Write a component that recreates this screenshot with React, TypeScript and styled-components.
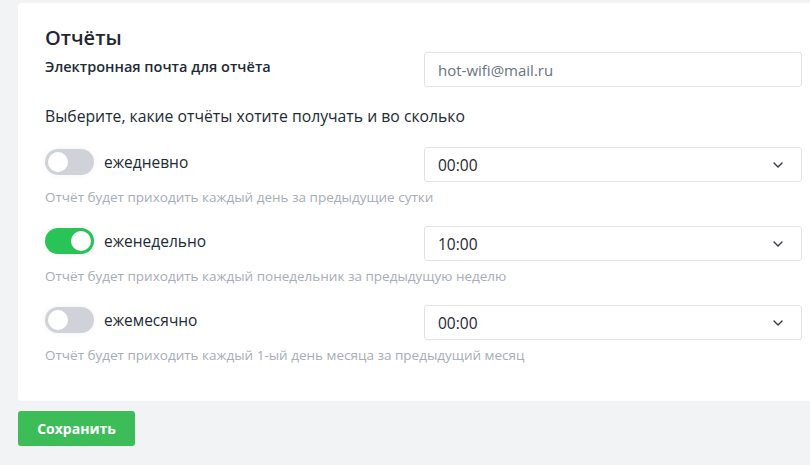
import React, { FC, useState } from "react";
import styled, { createGlobalStyle } from "styled-components";

const GlobalStyle = createGlobalStyle`
  html, body {
    margin: 0;
    padding: 0;
    background: #f2f3f5;
    overflow: hidden;
  }
  body {
    font-family: "Open Sans", "Noto Sans", sans-serif;
    color: #222a36;
  }
  * {
    box-sizing: border-box;
  }
`;

const StyledPage = styled.div`
  padding: 3px 0 0 18px;
  width: 830px;
`;

const StyledCard = styled.div`
  background: #ffffff;
  border-radius: 4px;
  padding: 21px 27px 17px 27px;
  width: 811px;
`;

const StyledTitle = styled.h2`
  font-size: 20px;
  font-weight: 600;
  margin: 0;
  line-height: 28px;
  color: #1f2633;
`;

const StyledRow = styled.div`
  display: grid;
  grid-template-columns: 379px 378px;
  align-items: start;
`;

const StyledLabel = styled.div`
  font-size: 14.5px;
  font-weight: 600;
  padding-top: 6px;
  line-height: 18px;
`;

const StyledInput = styled.div`
  height: 35px;
  border: 1px solid #e1e3e7;
  border-radius: 3px;
  padding: 0 13px;
  display: flex;
  align-items: center;
  font-size: 15px;
  color: #6b7280;
`;

const StyledIntro = styled.p`
  font-size: 15.75px;
  margin: 18px 0 20px 0;
  line-height: 22px;
`;

const StyledSwitchBlock = styled.div`
  margin-bottom: 20px;
`;

const StyledSwitchLabel = styled.label`
  display: flex;
  align-items: center;
  gap: 10px;
  font-size: 15.5px;
  padding-top: 2px;
  cursor: pointer;
`;

const StyledTrack = styled.span<{ $on: boolean }>`
  width: 49px;
  height: 26px;
  border-radius: 13px;
  background: ${(p) => (p.$on ? "#28c458" : "#cfd3d9")};
  box-shadow: 0 0 6px rgba(0, 0, 0, 0.06);
  display: flex;
  align-items: center;
  justify-content: ${(p) => (p.$on ? "flex-end" : "flex-start")};
  padding: 0 3px;
  flex-shrink: 0;
`;

const StyledKnob = styled.span`
  width: 20px;
  height: 20px;
  border-radius: 50%;
  background: #ffffff;
`;

const StyledSelect = styled.div`
  height: 35px;
  border: 1px solid #e1e3e7;
  border-radius: 3px;
  padding: 0 18px 0 13px;
  display: flex;
  align-items: center;
  justify-content: space-between;
  font-size: 15.5px;
  color: #1f2633;
`;

const StyledHint = styled.div`
  font-size: 13.5px;
  color: #a6adb8;
  margin-top: 6px;
  line-height: 18px;
`;

const StyledButton = styled.button`
  margin-top: 10px;
  width: 117px;
  height: 35px;
  border: none;
  border-radius: 3px;
  background: #3dbd57;
  color: #ffffff;
  font-family: inherit;
  font-size: 14px;
  font-weight: 700;
  cursor: pointer;
`;

const Chevron: FC = () => (
  <svg width="10" height="6" viewBox="0 0 10 6" fill="none">
    <path d="M1 1l4 4 4-4" stroke="#333b47" strokeWidth="1.4" strokeLinecap="round" strokeLinejoin="round" />
  </svg>
);

const reports = [
  { title: "ежедневно", time: "00:00", on: false, hint: "Отчёт будет приходить каждый день за предыдущие сутки" },
  { title: "еженедельно", time: "10:00", on: true, hint: "Отчёт будет приходить каждый понедельник за предыдущую неделю" },
  { title: "ежемесячно", time: "00:00", on: false, hint: "Отчёт будет приходить каждый 1-ый день месяца за предыдущий месяц" },
];

const App: FC = () => {
  const [state, setState] = useState(reports.map((r) => r.on));

  return (
    <StyledPage>
      <GlobalStyle />
      <StyledCard>
        <StyledTitle>Отчёты</StyledTitle>
        <StyledRow>
          <StyledLabel>Электронная почта для отчёта</StyledLabel>
          <StyledInput>hot-wifi@mail.ru</StyledInput>
        </StyledRow>
        <StyledIntro>Выберите, какие отчёты хотите получать и во сколько</StyledIntro>
        {reports.map((r, i) => (
          <StyledSwitchBlock key={r.title}>
            <StyledRow>
              <StyledSwitchLabel
                onClick={() => setState(state.map((v, j) => (j === i ? !v : v)))}
              >
                <StyledTrack $on={state[i]}>
                  <StyledKnob />
                </StyledTrack>
                {r.title}
              </StyledSwitchLabel>
              <StyledSelect>
                {r.time}
                <Chevron />
              </StyledSelect>
            </StyledRow>
            <StyledHint>{r.hint}</StyledHint>
          </StyledSwitchBlock>
        ))}
      </StyledCard>
      <StyledButton>Сохранить</StyledButton>
    </StyledPage>
  );
};

export default App;
